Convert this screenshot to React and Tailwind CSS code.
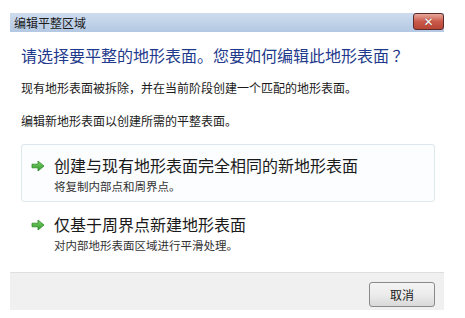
import React from "react";

const font = { fontFamily: '"Noto Sans CJK SC", "Noto Sans", sans-serif' };

const Arrow = () => (
  <svg width="14" height="12" viewBox="0 0 14 12" className="shrink-0">
    <defs>
      <linearGradient id="ga" x1="0" y1="0" x2="0" y2="1">
        <stop offset="0" stopColor="#7fd36b" />
        <stop offset="1" stopColor="#2f9a2a" />
      </linearGradient>
    </defs>
    <path d="M1 4.2 H7 V1 L13 6 L7 11 V7.8 H1 Z" fill="url(#ga)" stroke="#2c8a27" strokeWidth="0.8" strokeLinejoin="round" />
  </svg>
);

const Option = ({ title, sub, active }) => (
  <div
    className={`flex items-start pl-[9px] pt-[10px] pb-[7px] rounded-[3px] border ${
      active ? "border-[#dce8ee] bg-[#fbfdfe]" : "border-transparent"
    }`}
  >
    <div className="w-[23px] pt-[5px]">
      <Arrow />
    </div>
    <div className="flex flex-col">
      <span className="text-[16px] leading-[20px] text-[#1a1a1a]">{title}</span>
      <span className="text-[11.5px] leading-[16px] mt-[3px] text-[#333]">{sub}</span>
    </div>
  </div>
);

export default function App() {
  return (
    <div className="w-[465px] h-[318px] bg-white pt-[13px] px-[10px]" style={font}>
      <div className="w-[434px] flex flex-col">
        {/* title bar */}
        <div className="h-[19px] flex items-start justify-between bg-gradient-to-b from-[#cfdcee] to-[#b3c8e3]">
          <span className="text-[12px] leading-[19px] pl-[4px] text-[#1b1b1b]">编辑平整区域</span>
          <div className="w-[31px] h-[17px] rounded-[3px] border border-[#5b2a2a] bg-gradient-to-b from-[#e6a99c] via-[#c9594a] to-[#b84536] flex items-center justify-center">
            <span className="text-white text-[12px] leading-none font-bold" style={{ fontFamily: '"DejaVu Sans", sans-serif', textShadow: "0 0 1px #5b2a2a" }}>
              ✕
            </span>
          </div>
        </div>

        {/* body */}
        <div className="bg-white pl-[11px] pr-[9px] pt-[13px] pb-[11px] flex flex-col">
          <div className="text-[16px] leading-[20px] text-[#1f3a8c]">
            请选择要平整的地形表面。您要如何编辑此地形表面 ？
          </div>
          <div className="text-[12px] leading-[16px] text-[#1a1a1a] mt-[15px]">
            现有地形表面被拆除，并在当前阶段创建一个匹配的地形表面。
          </div>
          <div className="text-[12px] leading-[16px] text-[#1a1a1a] mt-[17px]">
            编辑新地形表面以创建所需的平整表面。
          </div>
          <div className="mt-[15px] flex flex-col gap-[1px]">
            <Option active title="创建与现有地形表面完全相同的新地形表面" sub="将复制内部点和周界点。" />
            <Option title="仅基于周界点新建地形表面" sub="对内部地形表面区域进行平滑处理。" />
          </div>
        </div>

        {/* footer */}
        <div className="h-[38px] bg-[#f0f0f0] border-t border-[#dfdfdf] flex items-start justify-end pr-[9px] pt-[9px]">
          <button className="w-[66px] h-[25px] rounded-[3px] border border-[#8a8a8a] bg-gradient-to-b from-[#f4f4f4] via-[#ececec] to-[#d9d9d9] text-[12px] leading-none text-[#1a1a1a]">
            取消
          </button>
        </div>
      </div>
    </div>
  );
}
